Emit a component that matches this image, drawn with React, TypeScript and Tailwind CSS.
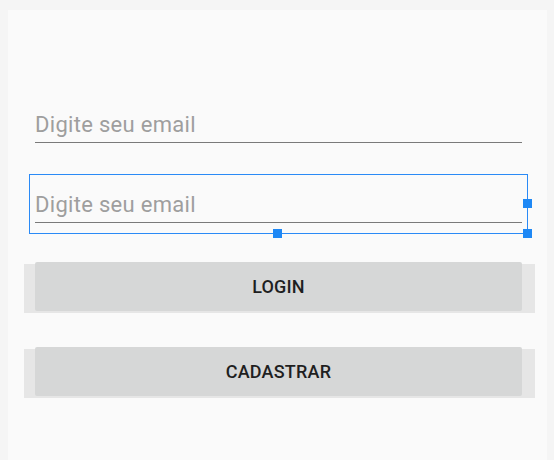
const font = { fontFamily: "Roboto, 'Noto Sans', sans-serif" };

function Handle({ className }: { className: string }) {
  return <span className={`absolute w-[9px] h-[9px] bg-[#1e88f5] ${className}`} />;
}

function Field() {
  return (
    <div className="w-[487px] pb-[7px] border-b border-[#7a7a7a]">
      <span className="block text-[22px] leading-[21px] tracking-[0.3px] text-[#9e9e9e]">Digite seu email</span>
    </div>
  );
}

function Button({ label }: { label: string }) {
  return (
    <div className="ml-[16px] w-[511px] h-[49px] pl-[11px] pr-[13px] bg-[#e6e6e6]">
      <button className="relative -top-[2px] w-[487px] h-[49px] bg-[#d6d7d7] rounded-[2px] text-[18px] font-medium tracking-[0.2px] text-[#1f1f1f] uppercase">
        {label}
      </button>
    </div>
  );
}

export default function App() {
  return (
    <div className="w-[554px] h-[460px] bg-[#f5f5f5] pt-[10px] pl-[8px] pr-[7px] overflow-hidden" style={font}>
      <div className="h-[450px] bg-[#fafafa] flex flex-col pt-[104px]">
        {/* email */}
        <div className="ml-[27px]">
          <Field />
        </div>

        {/* selected field */}
        <div className="relative ml-[21px] mt-[31px] w-[499px] border border-[#2a8af6] pt-[19px] pb-[10px] px-[5px]">
          <Field />
          <Handle className="-right-[5px] top-[24px]" />
          <Handle className="left-[243px] -bottom-[5px]" />
          <Handle className="-right-[5px] -bottom-[5px]" />
        </div>

        <div className="flex flex-col gap-[36px] mt-[30px]">
          <Button label="Login" />
          <Button label="Cadastrar" />
        </div>
      </div>
    </div>
  );
}
